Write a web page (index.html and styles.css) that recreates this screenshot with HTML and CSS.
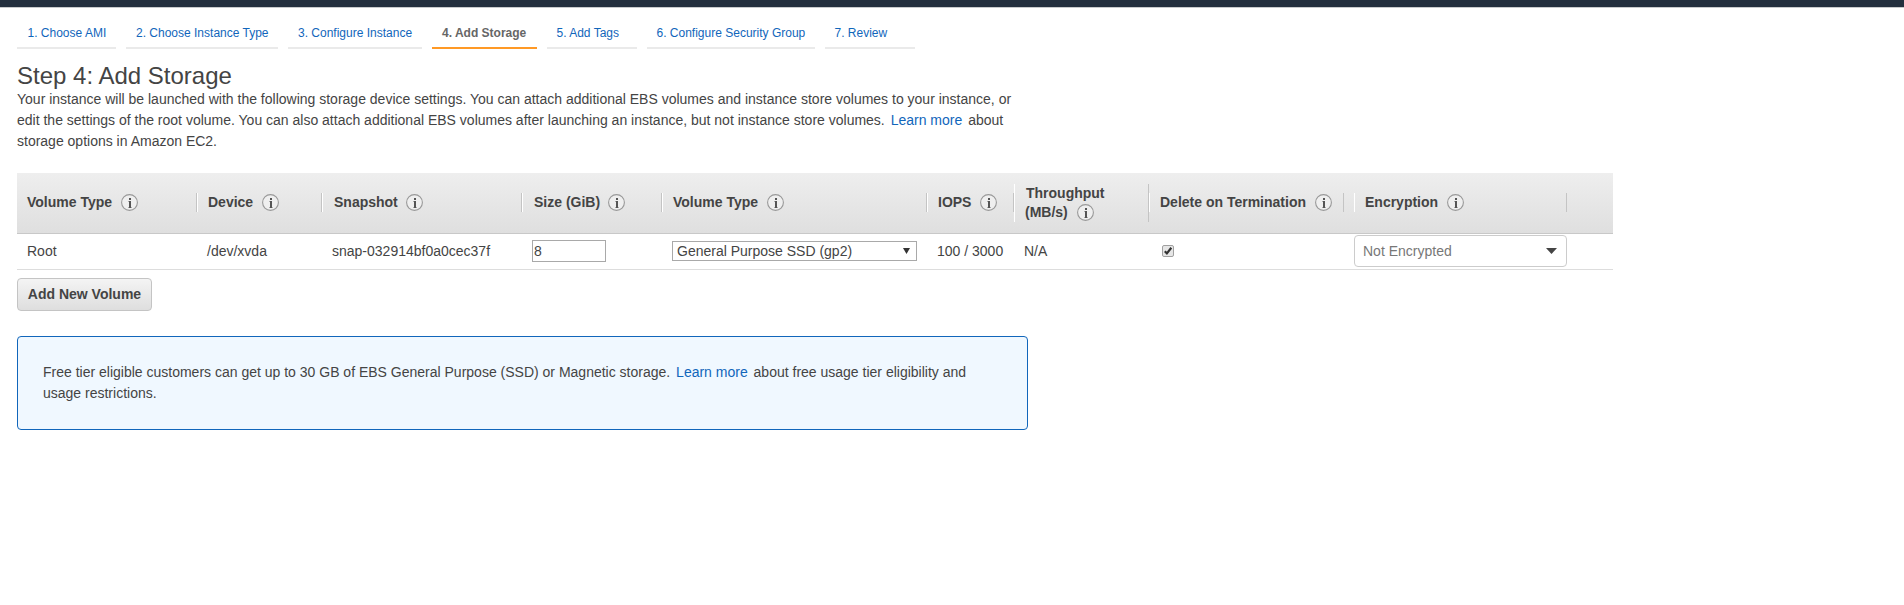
FILE: index.html
```html
<!DOCTYPE html>
<html lang="en">
<head>
<meta charset="utf-8">
<title>Add Storage</title>
<link rel="stylesheet" href="styles.css">
</head>
<body>
<svg width="0" height="0" class="defs">
  <symbol id="info" viewBox="0 0 17 17">
    <circle cx="8.5" cy="8.5" r="7.9" fill="#efefef" stroke="#999" stroke-width="1.1"/>
    <path d="M7 7h1v1H7zM7 13h4v1H7z" fill="#aaa"/>
    <path d="M8 4h2v2H8zM8 7h2v7H8z" fill="#555"/>
  </symbol>
</svg>
<div class="topbar"></div>
<main class="page">
  <nav class="steps">
    <a class="step s1"><span>1. Choose AMI</span></a>
    <a class="step s2"><span>2. Choose Instance Type</span></a>
    <a class="step s3"><span>3. Configure Instance</span></a>
    <a class="step s4 active"><span>4. Add Storage</span></a>
    <a class="step s5"><span>5. Add Tags</span></a>
    <a class="step s6"><span>6. Configure Security Group</span></a>
    <a class="step s7"><span>7. Review</span></a>
  </nav>
  <h1 class="title">Step 4: Add Storage</h1>
  <p class="intro"><span>Your instance will be launched with the following storage device settings. You can attach additional EBS volumes and instance store volumes to your instance, or</span><br><span>edit the settings of the root volume. You can also attach additional EBS volumes after launching an instance, but not instance store volumes.</span> <a class="link">Learn more</a> about<br>storage options in Amazon EC2.</p>

  <section class="table">
    <div class="grid head">
      <div class="th first"><span>Volume Type</span><svg class="info"><use href="#info"/></svg></div>
      <div class="th"><span>Device</span><svg class="info"><use href="#info"/></svg></div>
      <div class="th snapshot"><span>Snapshot</span><svg class="info"><use href="#info"/></svg></div>
      <div class="th size-head"><span>Size (GiB)</span><svg class="info"><use href="#info"/></svg></div>
      <div class="th"><span>Volume Type</span><svg class="info"><use href="#info"/></svg></div>
      <div class="th"><span>IOPS</span><svg class="info"><use href="#info"/></svg></div>
      <div class="th tall"><span class="first-line">Throughput</span><div class="second"><span>(MB/s)</span><svg class="info"><use href="#info"/></svg></div></div>
      <div class="th"><span>Delete on Termination</span><svg class="info"><use href="#info"/></svg></div>
      <div class="th enc"><span>Encryption</span><svg class="info"><use href="#info"/></svg></div>
    </div>
    <div class="grid row">
      <div class="td">Root</div>
      <div class="td">/dev/xvda</div>
      <div class="td">snap-032914bf0a0cec37f</div>
      <div class="td"><div class="size">8</div></div>
      <div class="td"><div class="select"><span>General Purpose SSD (gp2)</span><svg width="7" height="6"><path d="M0 0h7L3.5 6z" fill="#333"/></svg></div></div>
      <div class="td">100 / 3000</div>
      <div class="td">N/A</div>
      <div class="td check"><svg width="12" height="12"><rect x=".5" y=".5" width="11" height="11" rx="1.5" fill="#e6e6e6" stroke="#a0a0a0"/><path d="M2.8 6.2l2.1 2.2 4.4-5.6" fill="none" stroke="#333" stroke-width="2.2"/></svg></div>
      <div class="td enc-cell"><div class="enc-select"><span>Not Encrypted</span><svg width="11" height="6"><path d="M0 0h11L5.5 6z" fill="#444"/></svg></div></div>
    </div>
  </section>
  <button class="add">Add New Volume</button>
  <aside class="notice"><span>Free tier eligible customers can get up to 30 GB of EBS General Purpose (SSD) or Magnetic storage.</span> <a class="link">Learn more</a> <span>about free usage tier eligibility and</span><br>usage restrictions.</aside>
</main>
</body>
</html>
```
FILE: styles.css
```css
* { box-sizing: border-box; }
body { margin: 0; background: #fff; color: #444; font: 14px/21px "Liberation Sans", Arial, sans-serif; overflow: hidden; }
.defs { position: absolute; }
.topbar { height: 8px; background: #232f3e; border-bottom: 1px solid #c8cacc; }
.page { padding: 12px 0 0 17px; white-space: nowrap; }
.steps { display: flex; gap: 10px; height: 29px; }
.step { padding: 2px 0 0 10px; border-bottom: 2px solid #eaeaea; font-size: 12px; line-height: 22px; color: #1166bb; }
.step.active { color: #666; font-weight: bold; border-color: #ff9925; }
.s1 { width: 99px; }
.s2 { width: 152px; }
.s3 { width: 134px; }
.s4 { width: 105px; }
.s5 { width: 90px; }
.s6 { width: 168px; }
.s7 { width: 90px; }
.s5, .s6, .s7 { padding-left: 9.5px; }
.s1 { padding-left: 10.5px; }
.title { margin: 14px 0 0; font-size: 24px; line-height: 26px; font-weight: normal; }
.intro { margin: 0; }
.link { color: #1166bb; margin: 0 2px; }
.table { width: 1596px; margin-top: 21px; }
.grid { display: grid; grid-template-columns: 180px 125px 200px 140px 265px 87px 135px 195px 10px 213px 46px; align-items: center; }
.head { height: 61px; padding-bottom: 1px; background: linear-gradient(#eee, #dfdfdf); border-bottom: 1px solid #c8c8c8; font-weight: bold; }
.th { display: flex; align-items: center; height: 19px; padding-left: 10px; border-left: 1px solid #fff; border-right: 1px solid #c4c4c4; line-height: 19px; }
.th.first { border-left: 0; }
.th.tall { flex-direction: column; align-items: flex-start; height: 38px; margin-top: 1px; }
.first-line { padding-left: 1px; }
.snapshot, .size-head { padding-left: 11px; }
.second { display: flex; align-items: center; }
.info { width: 17px; height: 17px; margin-left: 9px; flex: none; }
.snapshot .info, .size-head .info { margin-left: 8px; }
.enc, .enc-cell { grid-column: 10; }
.row { height: 36px; padding-bottom: 1px; border-bottom: 1px solid #ddd; }
.td { padding-left: 10px; line-height: 22px; }
.size { width: 74px; height: 22px; border: 1px solid #a9a9a9; padding-left: 1px; line-height: 20px; }
.select { display: flex; justify-content: space-between; align-items: center; width: 245px; height: 20px; padding: 0 6px 0 4px; border: 1px solid #a9a9a9; line-height: 18px; }
.check { padding-left: 13px; }
.check svg { display: block; }
.enc-cell { padding: 0; }
.enc-select { display: flex; justify-content: space-between; align-items: center; height: 32px; padding: 0 9px 0 8px; border: 1px solid #ccc; border-radius: 4px; color: #777; }
.add { display: block; width: 135px; height: 33px; margin-top: 8px; padding: 0 0 2px; border: 1px solid #c4c4c4; border-radius: 4px; background: linear-gradient(#f4f4f4, #dedede); color: #444; font: bold 14px "Liberation Sans", Arial, sans-serif; }
.notice { width: 1011px; height: 94px; margin-top: 25px; padding: 25px; border: 1px solid #1166bb; border-radius: 4px; background: #f0f8ff; }
```
